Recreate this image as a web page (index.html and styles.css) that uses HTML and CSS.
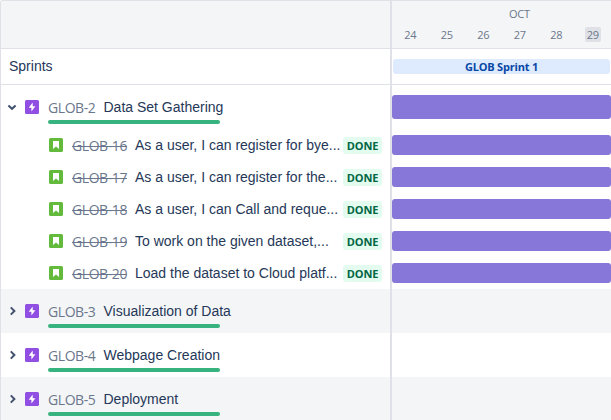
FILE: index.html
```
<!DOCTYPE html>
<html lang="en">
<head>
<meta charset="utf-8">
<title>Roadmap</title>
<link rel="stylesheet" href="styles.css">
</head>
<body>
<svg class="defs" width="0" height="0">
  <symbol id="epic" viewBox="0 0 14 14"><rect width="14" height="14" rx="1.5" fill="#904ee2"/><path d="M7.7 2.6 3.7 7.7h2.7v3.7l4-5.1H7.7z" fill="#fff"/></symbol>
  <symbol id="story" viewBox="0 0 14 14"><rect width="14" height="14" rx="1.5" fill="#63ba3c"/><path d="M4 3h6v8L7 8.4 4 11z" fill="#fff"/></symbol>
  <symbol id="right" viewBox="0 0 10 10"><path d="M3.8 1.4 7.4 5 3.8 8.6" fill="none" stroke="#42526e" stroke-width="2"/></symbol>
  <symbol id="down" viewBox="0 0 10 10"><path d="M1.4 3.4 5 6.8l3.6-3.4" fill="none" stroke="#42526e" stroke-width="2"/></symbol>
</svg>
<main class="roadmap">
  <section class="list">
    <div class="head"></div>
    <div class="sprints">Sprints</div>
    <div class="epic"><svg class="chevron"><use href="#down"/></svg><svg class="icon"><use href="#epic"/></svg><div class="summary"><span class="key">GLOB-2</span><span class="title">Data Set Gathering</span><i class="progress"></i></div></div>
    <div class="story"><svg class="icon"><use href="#story"/></svg><span class="key">GLOB-16</span><span class="title">As a user, I can register for bye...</span><b class="status">DONE</b></div>
    <div class="story"><svg class="icon"><use href="#story"/></svg><span class="key">GLOB-17</span><span class="title">As a user, I can register for the...</span><b class="status">DONE</b></div>
    <div class="story"><svg class="icon"><use href="#story"/></svg><span class="key">GLOB-18</span><span class="title">As a user, I can Call and reque...</span><b class="status">DONE</b></div>
    <div class="story"><svg class="icon"><use href="#story"/></svg><span class="key">GLOB-19</span><span class="title">To work on the given dataset,...</span><b class="status">DONE</b></div>
    <div class="story"><svg class="icon"><use href="#story"/></svg><span class="key">GLOB-20</span><span class="title">Load the dataset to Cloud platf...</span><b class="status">DONE</b></div>
    <div class="epic shaded"><svg class="chevron"><use href="#right"/></svg><svg class="icon"><use href="#epic"/></svg><div class="summary"><span class="key">GLOB-3</span><span class="title">Visualization of Data</span><i class="progress"></i></div></div>
    <div class="epic"><svg class="chevron"><use href="#right"/></svg><svg class="icon"><use href="#epic"/></svg><div class="summary"><span class="key">GLOB-4</span><span class="title">Webpage Creation</span><i class="progress"></i></div></div>
    <div class="epic shaded"><svg class="chevron"><use href="#right"/></svg><svg class="icon"><use href="#epic"/></svg><div class="summary"><span class="key">GLOB-5</span><span class="title">Deployment</span><i class="progress"></i></div></div>
  </section>
  <section class="timeline">
    <div class="head">
      <div class="month">OCT</div>
      <div class="days"><span>24</span><span>25</span><span>26</span><span>27</span><span>28</span><span><em>29</em></span></div>
    </div>
    <div class="sprints"><div class="sprint">GLOB Sprint 1</div></div>
    <div class="epic"><div class="bar"></div></div>
    <div class="story"><div class="bar"></div></div>
    <div class="story"><div class="bar"></div></div>
    <div class="story"><div class="bar"></div></div>
    <div class="story"><div class="bar"></div></div>
    <div class="story"><div class="bar"></div></div>
    <div class="epic shaded"></div>
    <div class="epic"></div>
    <div class="epic shaded"></div>
  </section>
</main>
</body>
</html>
```
FILE: styles.css
```
* { box-sizing: border-box; }
body { margin: 0; overflow: hidden; background: #fff; color: #253858; font: 14px "Liberation Sans", Arial, sans-serif; }
.defs { position: absolute; }
.roadmap { display: grid; grid-template-columns: 391px 219px; width: 611px; height: 420px; overflow: hidden; border: solid #dfe1e6; border-width: 1px 0 0 1px; border-top-left-radius: 3px; }
.list { border-right: 2px solid #dfe0e8; min-width: 0; }
.head { height: 48px; background: #f4f5f7; border-bottom: 1px solid #dfe1e6; }
.sprints { height: 36px; border-bottom: 1px solid #dfe1e6; display: flex; align-items: center; }
.list .sprints { padding: 0 0 1px 8px; }
.epic { height: 44px; display: flex; align-items: center; }
.story { height: 32px; display: flex; align-items: center; }
.list .story { padding-left: 48px; }
.shaded { background: #f4f5f7; }
.chevron { width: 10px; height: 10px; margin: 0 8px 0 6px; flex: none; }
.icon { width: 14px; height: 14px; flex: none; }
.summary { margin-left: 9px; height: 44px; padding-top: 12px; display: grid; grid-template-columns: 55.5px auto; grid-template-rows: 20px 3px 4px; }
.summary .progress { grid-row: 3; grid-column: 1 / -1; }
.progress { width: 172px; height: 4px; border-radius: 2px; background: #36b37e; }
.key { color: #6b778c; font: 14px/21px "Open Sans", "Noto Sans", sans-serif; white-space: nowrap; letter-spacing: -.42px; }
.title { line-height: 20px; white-space: nowrap; }
.story .key { width: 63px; margin-left: 9px; flex: none; text-decoration: line-through; text-decoration-thickness: 1px; text-decoration-skip-ink: none; padding-top: 1px; }
.story .title { width: 208px; flex: none; }
.status { width: 39px; height: 17px; border-radius: 3px; background: #e3fcef; color: #006644; font: 700 11px/18px "Open Sans", "Noto Sans", sans-serif; text-align: center; letter-spacing: -.1px; }
.timeline { min-width: 0; color: #6b778c; font-family: "Open Sans", "Noto Sans", sans-serif; }
.month { height: 26px; padding-top: 5px; font-size: 11px; line-height: 16px; text-align: center; margin-left: 36px; letter-spacing: -.2px; }
.days { display: grid; grid-template-columns: repeat(6, 36.5px); font-size: 11px; line-height: 15px; text-align: center; letter-spacing: -.2px; }
.days em { display: inline-block; width: 16px; height: 15px; border-radius: 2px; background: #dfe1e6; font-style: normal; }
.sprint { width: 217px; height: 15px; margin-left: 1px; border-radius: 3px; background: #deebff; color: #0747a6; font-size: 11px; font-weight: 700; line-height: 16px; text-align: center; letter-spacing: -.2px; }
.bar { width: 100%; height: 20px; border-radius: 3px; background: #8777d9; }
.epic .bar { height: 24px; }
```
